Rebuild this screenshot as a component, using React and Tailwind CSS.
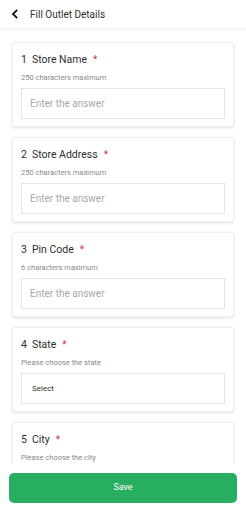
import React from "react";

const fields = [
  { n: 1, label: "Store Name", hint: "250 characters maximum", type: "input" },
  { n: 2, label: "Store Address", hint: "250 characters maximum", type: "input" },
  { n: 3, label: "Pin Code", hint: "6 characters maximum", type: "input" },
  { n: 4, label: "State", hint: "Please choose the state", type: "select" },
  { n: 5, label: "City", hint: "Please choose the city", type: "select" },
];

function Card({ f }) {
  return (
    <div className="shrink-0 h-[85px] bg-white rounded-[3px] border border-[#f0f0f0] shadow-[0_1px_3px_rgba(0,0,0,0.12)] pt-[10px] px-[8px] pb-[9px] flex flex-col">
      <div className="h-[14px] flex items-center text-[10.5px] leading-[14px] text-[#2e2e2e]">
        <span>{f.n}</span>
        <span className="ml-[5px]">{f.label}</span>
        <span className="ml-[6px] text-[#d9363e] text-[10px]">*</span>
      </div>
      <div className="mt-[6px] h-[10px] text-[7.5px] leading-[10px] text-[#8a8a8a]">{f.hint}</div>
      <div className="mt-[5px] h-[31px] border border-[#e4e4e4] flex items-center shrink-0">
        {f.type === "input" ? (
          <span className="ml-[8px] text-[10px] text-[#a8a8a8]">Enter the answer</span>
        ) : (
          <span className="ml-[10px] text-[8px] text-[#333]">Select</span>
        )}
      </div>
    </div>
  );
}

export default function App() {
  return (
    <div className="w-[246px] h-[512px] bg-white flex flex-col overflow-hidden" style={{ fontFamily: "Roboto, 'Noto Sans', sans-serif" }}>
      <div className="h-[28px] shrink-0 flex items-center bg-white shadow-[0_1px_3px_rgba(0,0,0,0.08)] z-10">
        <svg width="12" height="12" viewBox="0 0 12 12" className="ml-[9px]">
          <path d="M7.5 2.5 L4 6 L7.5 9.5" fill="none" stroke="#111" strokeWidth="1.8" strokeLinecap="square" />
        </svg>
        <span className="ml-[9px] text-[10px] text-[#2e2e2e]">Fill Outlet Details</span>
      </div>
      <div className="flex-1 overflow-hidden px-[12px] pt-[14px] flex flex-col gap-[10px]">
        {fields.map((f) => (
          <Card key={f.n} f={f} />
        ))}
      </div>
      <div className="h-[48px] shrink-0 bg-white px-[9px] pt-[9px] pb-[9px]">
        <button className="w-full h-[30px] rounded-[5px] bg-[#27ae60] text-white text-[9px] flex items-center justify-center">
          Save
        </button>
      </div>
    </div>
  );
}
